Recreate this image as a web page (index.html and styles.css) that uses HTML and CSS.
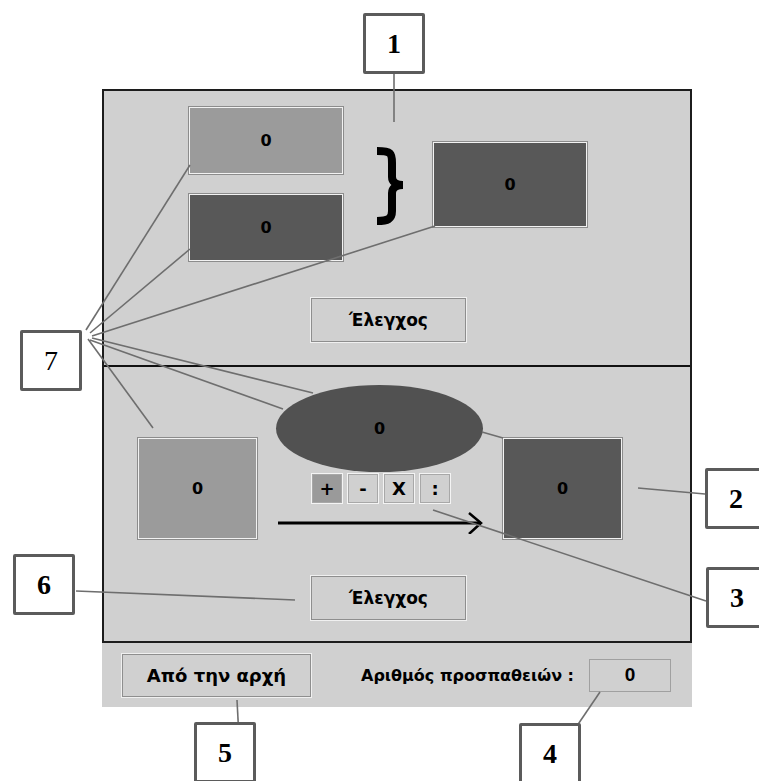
FILE: index.html
```html
<!DOCTYPE html>
<html lang="el">
<head>
  <meta charset="UTF-8" />
  <meta name="viewport" content="width=device-width, initial-scale=1.0"/>
  <title>Πρόσθεση και πράξεις</title>
  <link rel="stylesheet" href="styles.css">
</head>
<body>
<div class="page">

  <div class="panel">
    <!-- top: two numbers and their sum -->
    <div class="stage stage-top">
      <div class="row">
        <div class="stack">
          <div class="cell light wide">0</div>
          <div class="cell dark wide">0</div>
        </div>
        <svg class="brace" width="32" height="82" viewBox="0 0 32 82">
          <path d="M2,6 C16,6 17,8 17,18 L17,32 C17,37 21,40 28,40 C21,40 17,43 17,48 L17,66 C17,74 13,76 2,76" fill="none" stroke="#000" stroke-width="8"/>
        </svg>
        <div class="cell dark sum">0</div>
      </div>
      <button class="btn check">Έλεγχος</button>
    </div>

    <!-- bottom: operation -->
    <div class="stage stage-bottom">
      <div class="row">
        <div class="cell light square">0</div>
        <div class="mid">
          <div class="oval">0</div>
          <div class="ops">
            <span class="op on">+</span>
            <span class="op">-</span>
            <span class="op">X</span>
            <span class="op">:</span>
          </div>
          <svg class="arrow" width="207" height="30" viewBox="0 0 207 30">
            <line x1="2" y1="19" x2="205" y2="19" stroke="#000" stroke-width="3"/>
            <polyline points="193,9 205,19 193,30" fill="none" stroke="#000" stroke-width="2.5"/>
          </svg>
        </div>
        <div class="cell dark square result">0</div>
      </div>
      <button class="btn check">Έλεγχος</button>
    </div>
  </div>

  <div class="footer">
    <button class="btn restart">Από την αρχή</button>
    <span class="tries-label">Αριθμός προσπαθειών :</span>
    <span class="tries">0</span>
  </div>

  <!-- callout lines -->
  <svg class="leaders" width="759" height="781" viewBox="0 0 759 781">
    <g stroke="#6e6e6e" stroke-width="1.6" fill="none">
      <line x1="394" y1="72" x2="394" y2="122"/>
      <line x1="86" y1="330" x2="190" y2="165"/>
      <line x1="90" y1="333" x2="190" y2="249"/>
      <line x1="92" y1="336" x2="435" y2="226"/>
      <line x1="88" y1="339" x2="153" y2="428"/>
      <line x1="90" y1="340" x2="283" y2="409"/>
      <line x1="92" y1="338" x2="313" y2="393"/>
      <line x1="482" y1="432" x2="503" y2="438"/>
      <line x1="638" y1="488" x2="705" y2="494"/>
      <line x1="433" y1="510" x2="706" y2="601"/>
      <line x1="76" y1="591" x2="295" y2="600"/>
      <line x1="237" y1="700" x2="239" y2="738"/>
      <line x1="600" y1="692" x2="566" y2="742"/>
    </g>
  </svg>

  <div class="tag t1">1</div>
  <div class="tag t2">2</div>
  <div class="tag t3">3</div>
  <div class="tag t4">4</div>
  <div class="tag t5">5</div>
  <div class="tag t6">6</div>
  <div class="tag t7">7</div>

</div>
</body>
</html>
```

FILE: styles.css
```css
body {
  margin: 0;
  background: #fff;
  font-family: 'DejaVu Sans', Verdana, sans-serif;
}
.page {
  position: relative;
  width: 759px;
  height: 781px;
  overflow: hidden;
}

.panel {
  margin: 89px 0 0 102px;
  width: 590px;
  box-sizing: border-box;
  border: 2px solid #1c1c1c;
  background: #d0d0d0;
}
.stage {
  box-sizing: border-box;
  height: 276px;
}
.stage-top {
  border-bottom: 2px solid #111;
  padding: 16px 0 0 85px;
}
.stage-bottom {
  height: 274px;
  padding: 0 0 0 34px;
}
.row {
  display: flex;
  align-items: flex-start;
}
.stack {
  display: flex;
  flex-direction: column;
  gap: 20px;
}

.cell {
  display: flex;
  align-items: center;
  justify-content: center;
  box-sizing: border-box;
  border: 1px solid #f2f2f2;
  box-shadow: 0 0 0 1px #8c8c8c;
  font-weight: bold;
  font-size: 16px;
  color: #000;
}
.light { background: #9b9b9b; }
.dark { background: #585858; }
.wide { width: 154px; height: 67px; }
.sum {
  width: 154px;
  height: 85px;
  margin: 35px 0 0 26px;
}
.brace {
  margin: 38px 0 0 32px;
}
.square {
  width: 119px;
  height: 101px;
  margin-top: 71px;
}
.result { margin-left: 20px; }

.mid {
  margin-left: 19px;
  width: 207px;
}
.oval {
  margin-top: 18px;
  height: 87px;
  border-radius: 50%;
  background: #515151;
  display: flex;
  align-items: center;
  justify-content: center;
  font-weight: bold;
  font-size: 16px;
}
.ops {
  display: flex;
  gap: 4px;
  margin-top: 1px;
  padding-left: 35px;
}
.op {
  width: 32px;
  height: 31px;
  box-sizing: border-box;
  display: flex;
  align-items: center;
  justify-content: center;
  border: 1px solid #f4f4f4;
  box-shadow: inset 0 0 0 1px #a8a8a8;
  font-weight: bold;
  font-size: 18px;
}
.op.on { background: #9a9a9a; }
.arrow { display: block; }

.btn {
  display: block;
  font-family: 'DejaVu Sans', Verdana, sans-serif;
  font-weight: bold;
  font-size: 17px;
  color: #000;
  background: #d0d0d0;
  border: 1px solid #8e8e8e;
  box-shadow: 0 0 0 1px #f0f0f0;
  padding: 0;
}
.check {
  width: 155px;
  height: 44px;
  margin-top: 37px;
}
.stage-top .check { margin-left: 122px; }
.stage-bottom .check { margin-left: 173px; }

.footer {
  margin-left: 102px;
  width: 590px;
  height: 64px;
  background: #d0d0d0;
  display: flex;
  align-items: center;
}
.restart {
  width: 189px;
  height: 43px;
  margin-left: 20px;
  font-size: 18px;
}
.tries-label {
  margin-left: 50px;
  font-weight: bold;
  font-size: 16px;
}
.tries {
  margin-left: 15px;
  width: 82px;
  height: 33px;
  box-sizing: border-box;
  border: 1px solid #a0a0a0;
  display: flex;
  align-items: center;
  justify-content: center;
  font-family: 'Liberation Sans', Arial, sans-serif;
  font-weight: bold;
  font-size: 19px;
}

.leaders {
  position: absolute;
  left: 0;
  top: 0;
  pointer-events: none;
}
.tag {
  position: absolute;
  width: 62px;
  height: 61px;
  box-sizing: border-box;
  border: 3px solid #5b5b5b;
  border-radius: 2px;
  background: #fff;
  display: flex;
  align-items: center;
  justify-content: center;
  font-family: 'Liberation Serif', 'Times New Roman', serif;
  font-weight: bold;
  font-size: 28px;
  color: #000;
}
.t1 { left: 363px; top: 13px; }
.t2 { left: 705px; top: 468px; }
.t3 { left: 706px; top: 567px; }
.t4 { left: 519px; top: 723px; }
.t5 { left: 194px; top: 722px; }
.t6 { left: 13px; top: 554px; }
.t7 { left: 20px; top: 330px; font-weight: normal; }
```
